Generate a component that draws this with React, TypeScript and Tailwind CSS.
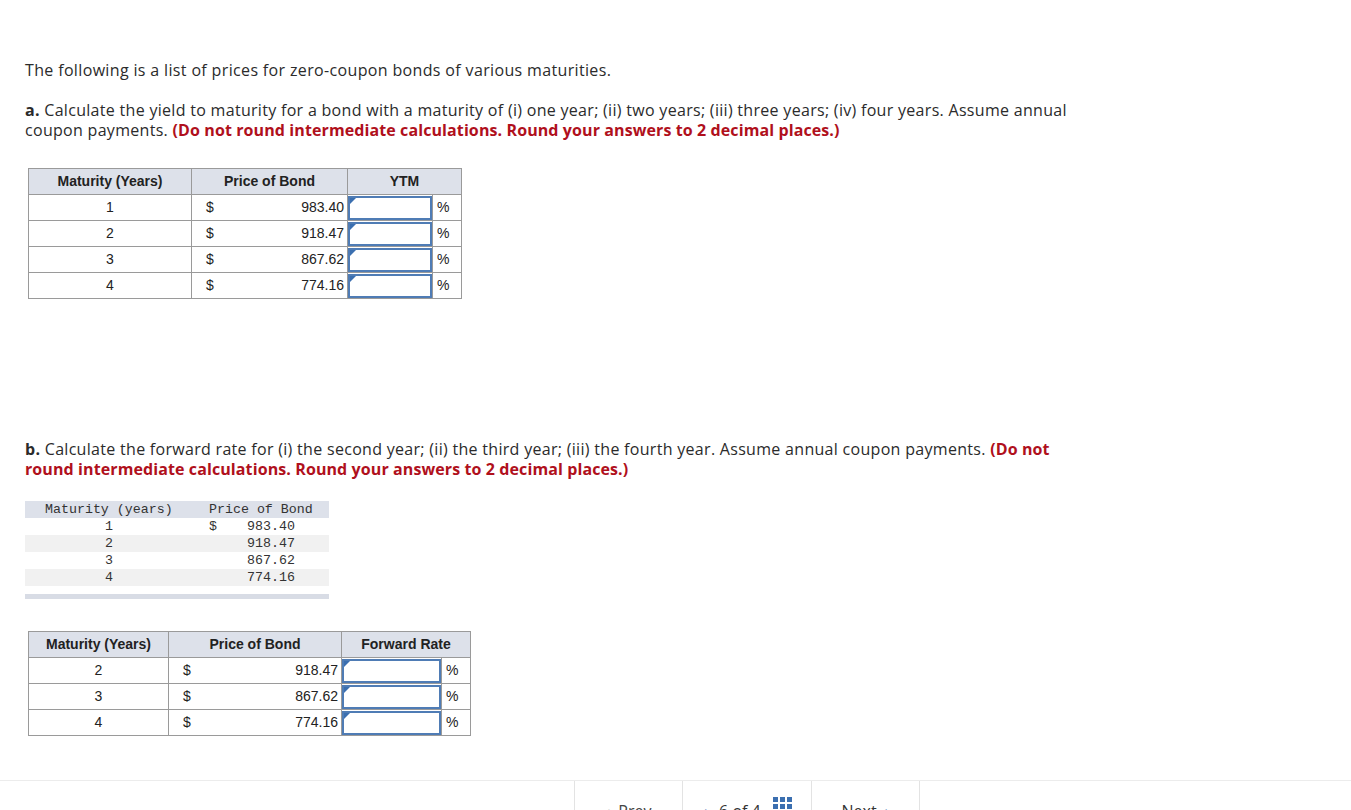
const rowsA = [
  { m: '1', p: '983.40' },
  { m: '2', p: '918.47' },
  { m: '3', p: '867.62' },
  { m: '4', p: '774.16' },
];

const rowsB = [
  { m: '2', p: '918.47' },
  { m: '3', p: '867.62' },
  { m: '4', p: '774.16' },
];

function AnswerInput() {
  return (
    <div className="relative h-[24px] w-full border-2 border-[#4f7cb5] bg-white">
      <div className="absolute left-0 top-0 h-0 w-0 border-l-[6px] border-b-[6px] border-l-[#3b6fb0] border-b-transparent" />
    </div>
  );
}

function BondTable({
  rows,
  last,
  widths,
}: {
  rows: { m: string; p: string }[];
  last: string;
  widths: [string, string, string, string];
}) {
  const [w1, w2, w3, w4] = widths;
  return (
    <table className="border-collapse text-[14px] text-[#222] font-['Liberation_Sans',Arial,sans-serif]">
      <thead>
        <tr className="bg-[#dde1ea]">
          <th className={`${w1} h-[26px] border border-[#9a9a9a] font-bold`}>Maturity (Years)</th>
          <th className={`${w2} h-[26px] border border-[#9a9a9a] font-bold`}>Price of Bond</th>
          <th colSpan={2} className="h-[26px] border border-[#9a9a9a] font-bold">{last}</th>
        </tr>
      </thead>
      <tbody>
        {rows.map((r) => (
          <tr key={r.m} className="h-[26px]">
            <td className={`${w1} border border-[#9a9a9a] text-center`}>{r.m}</td>
            <td className={`${w2} border border-[#9a9a9a] pr-[3px]`}>
              <div className="flex justify-between pl-[14px]">
                <span>$</span>
                <span>{r.p}</span>
              </div>
            </td>
            <td className={`${w3} border border-[#9a9a9a] p-0`}>
              <AnswerInput />
            </td>
            <td className={`${w4} border border-[#9a9a9a] pl-[4px]`}>%</td>
          </tr>
        ))}
      </tbody>
    </table>
  );
}

export default function App() {
  return (
    <div className="min-h-screen bg-white font-['Open_Sans',sans-serif] text-[#2b2b2b]">
      <div className="px-[25px] pt-[59px]">
        <p className="text-[16px] leading-[22px] tracking-[0.35px]">
          The following is a list of prices for zero-coupon bonds of various maturities.
        </p>

        <p className="mt-[19px] text-[16px] leading-[20px] tracking-[0.3px] whitespace-nowrap">
          <span className="font-bold">a.</span> Calculate the yield to maturity for a bond with a maturity of (i) one
          year; (ii) two years; (iii) three years; (iv) four years. Assume annual
          <br />
          coupon payments.{' '}
          <span className="font-bold tracking-[0.1px] text-[#b0101c]">
            (Do not round intermediate calculations. Round your answers to 2 decimal places.)
          </span>
        </p>

        <div className="mt-[28px] pl-[3px]">
          <BondTable
            rows={rowsA}
            last="YTM"
            widths={['w-[163px]', 'w-[156px]', 'w-[85px]', 'w-[29px]']}
          />
        </div>

        <p className="mt-[140px] text-[16px] leading-[20px] tracking-[0.3px] whitespace-nowrap">
          <span className="font-bold">b.</span> Calculate the forward rate for (i) the second year; (ii) the third
          year; (iii) the fourth year. Assume annual coupon payments.{' '}
          <span className="font-bold tracking-[0.1px] text-[#b0101c]">(Do not</span>
          <br />
          <span className="font-bold tracking-[0.1px] text-[#b0101c]">
            round intermediate calculations. Round your answers to 2 decimal places.)
          </span>
        </p>

        <div className="mt-[22px] w-[304px] font-['Liberation_Mono',monospace] text-[13.3px] leading-[17px] text-[#333]">
          <div className="flex bg-[#dde1ea]">
            <span className="w-[184px] pl-[20px]">Maturity (years)</span>
            <span>Price of Bond</span>
          </div>
          {rowsA.map((r, i) => (
            <div key={r.m} className={`flex ${i % 2 === 1 ? 'bg-[#f1f1f1]' : 'bg-white'}`}>
              <span className="w-[184px] pl-[80px]">{r.m}</span>
              <span className="w-[24px]">{i === 0 ? '$' : ''}</span>
              <span className="pl-[14px]">{r.p}</span>
            </div>
          ))}
          <div className="mt-[8px] h-[5px] bg-[#d8dce5]" />
        </div>

        <div className="mt-[32px] pl-[3px]">
          <BondTable
            rows={rowsB}
            last="Forward Rate"
            widths={['w-[140px]', 'w-[173px]', 'w-[100px]', 'w-[29px]']}
          />
        </div>
      </div>

      <div className="mt-[44px] border-t border-[#ececec]">
        <div className="ml-[574px] flex h-[60px] text-[16px] text-[#333]">
          <div className="flex w-[108px] items-start justify-center gap-2 border-l border-[#e3e3e3] pt-[18px]">
            <span className="text-[#c8c8c8]">‹</span>
            <span className="text-[#444]">Prev</span>
          </div>
          <div className="flex w-[129px] items-start justify-center gap-3 border-l border-[#e3e3e3] pt-[18px]">
            <span className="text-[#3b6fb0]">‹</span>
            <span>6 of 4</span>
            <div className="mt-[-2px] grid grid-cols-3 gap-[2px]">
              {Array.from({ length: 9 }).map((_, i) => (
                <div key={i} className="h-[5px] w-[5px] bg-[#3b6fb0]" />
              ))}
            </div>
          </div>
          <div className="flex w-[109px] items-start justify-center gap-2 border-l border-r border-[#e3e3e3] pt-[18px]">
            <span>Next</span>
            <span className="text-[#3b6fb0]">›</span>
          </div>
        </div>
      </div>
    </div>
  );
}
